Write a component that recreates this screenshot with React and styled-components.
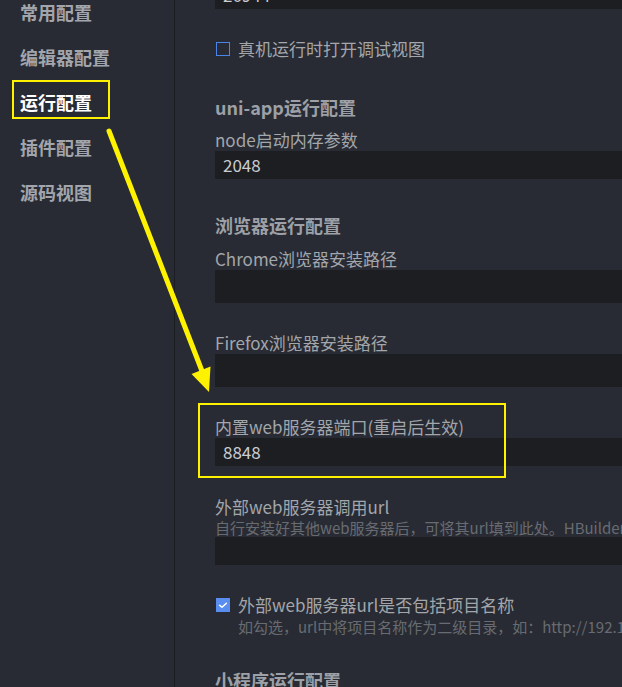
import React from "react";
import styled, { createGlobalStyle } from "styled-components";

const Global = createGlobalStyle`
  html, body {
    margin: 0;
    padding: 0;
    background: #282b33;
    overflow: hidden;
  }
  * { box-sizing: border-box; }
`;

const FONT = `"Noto Sans CJK SC", "Noto Sans", sans-serif`;

const Page = styled.div`
  position: relative;
  display: flex;
  width: 622px;
  height: 687px;
  overflow: hidden;
  background: #282b33;
  font-family: ${FONT};
`;

const Sidebar = styled.nav`
  width: 175px;
  flex-shrink: 0;
  border-right: 1px solid #1b1d22;
  background: #282b33;
`;

const NavList = styled.ul`
  list-style: none;
  margin: -10px 0 0;
  padding: 0;
`;

const NavItem = styled.li`
  height: 45px;
  line-height: 45px;
  padding-left: 20px;
  font-size: 18px;
  font-weight: 700;
  color: ${(p) => (p.$active ? "#ffffff" : "#a2a5ab")};
  white-space: nowrap;
`;

const Main = styled.main`
  flex: 1;
  min-width: 0;
  padding-left: 40px;
  overflow: hidden;
`;

const Column = styled.div`
  width: 640px;
  margin-top: -19px;
  display: flex;
  flex-direction: column;
`;

const Input = styled.div`
  height: ${(p) => (p.$tall ? 33 : 28)}px;
  line-height: ${(p) => (p.$tall ? 33 : 28)}px;
  margin-top: ${(p) => p.$mt || 0}px;
  background: #1d1e22;
  color: #c9ccd1;
  font-size: 17px;
  padding: 0 8px;
  white-space: nowrap;
`;

const Heading = styled.h3`
  margin: ${(p) => p.$mt}px 0 0;
  font-size: 18px;
  line-height: 24px;
  font-weight: 700;
  color: #9da0a6;
  white-space: nowrap;
`;

const Label = styled.div`
  margin-top: ${(p) => p.$mt}px;
  font-size: 17px;
  line-height: 22px;
  color: #a3a6ab;
  white-space: nowrap;
`;

const Desc = styled.div`
  padding-left: ${(p) => p.$indent || 0}px;
  font-size: 15px;
  line-height: ${(p) => p.$lh || 19}px;
  color: #686b71;
  white-space: nowrap;
`;

const CheckRow = styled.label`
  display: flex;
  align-items: center;
  gap: 8px;
  margin-top: ${(p) => p.$mt}px;
  height: 22px;
  font-size: 17px;
  line-height: 22px;
  color: #a3a6ab;
  white-space: nowrap;
`;

const Box = styled.span`
  width: 14px;
  height: 14px;
  margin-left: 1px;
  flex-shrink: 0;
  display: inline-flex;
  align-items: center;
  justify-content: center;
  border: ${(p) => (p.$checked ? "none" : "1.5px solid #4a86ea")};
  background: ${(p) => (p.$checked ? "#5a8df0" : "transparent")};
`;

const Highlight = styled.div`
  position: absolute;
  border: 2px solid #fff200;
  pointer-events: none;
`;

const Overlay = styled.svg`
  position: absolute;
  left: 0;
  top: 0;
  width: 622px;
  height: 687px;
  pointer-events: none;
`;

function Checkbox({ checked }) {
  return (
    <Box $checked={checked}>
      {checked && (
        <svg width="14" height="14" viewBox="0 0 14 14">
          <path d="M3.6 7.2 L6 9.3 L10.4 5.2" fill="none" stroke="#ffffff" strokeWidth="1.5" strokeLinecap="round" strokeLinejoin="round" />
        </svg>
      )}
    </Box>
  );
}

const navItems = ["常用配置", "编辑器配置", "运行配置", "插件配置", "源码视图"];

export default function App() {
  return (
    <>
      <Global />
      <Page>
        <Sidebar>
          <NavList>
            {navItems.map((n) => (
              <NavItem key={n} $active={n === "运行配置"}>
                {n}
              </NavItem>
            ))}
          </NavList>
        </Sidebar>
        <Main>
          <Column>
            <Input>26944</Input>
            <CheckRow $mt={29}>
              <Checkbox />
              真机运行时打开调试视图
            </CheckRow>

            <Heading $mt={35}>uni-app运行配置</Heading>
            <Label $mt={10}>node启动内存参数</Label>
            <Input>2048</Input>

            <Heading $mt={34}>浏览器运行配置</Heading>
            <Label $mt={11}>Chrome浏览器安装路径</Label>
            <Input $tall />
            <Label $mt={29}>Firefox浏览器安装路径</Label>
            <Input $tall />

            <Label $mt={29}>内置web服务器端口(重启后生效)</Label>
            <Input>8848</Input>

            <Label $mt={30}>外部web服务器调用url</Label>
            <Desc>自行安装好其他web服务器后，可将其url填到此处。HBuilderX运行时将使用此地址</Desc>
            <Input />

            <CheckRow $mt={29}>
              <Checkbox checked />
              外部web服务器url是否包括项目名称
            </CheckRow>
            <Desc $indent={23} $lh={22}>
              如勾选，url中将项目名称作为二级目录，如：http://192.168.1.1/项目名称/
            </Desc>

            <Heading $mt={30}>小程序运行配置</Heading>
          </Column>
        </Main>

        <Highlight style={{ left: 12, top: 80, width: 98, height: 39 }} />
        <Highlight style={{ left: 198, top: 403, width: 308, height: 75 }} />
        <Overlay viewBox="0 0 622 687">
          <line x1="109" y1="131" x2="202" y2="371" stroke="#fff200" strokeWidth="5" strokeLinecap="round" />
          <polygon points="209,392 191.5,374 210.5,366.5" fill="#fff200" />
        </Overlay>
      </Page>
    </>
  );
}
